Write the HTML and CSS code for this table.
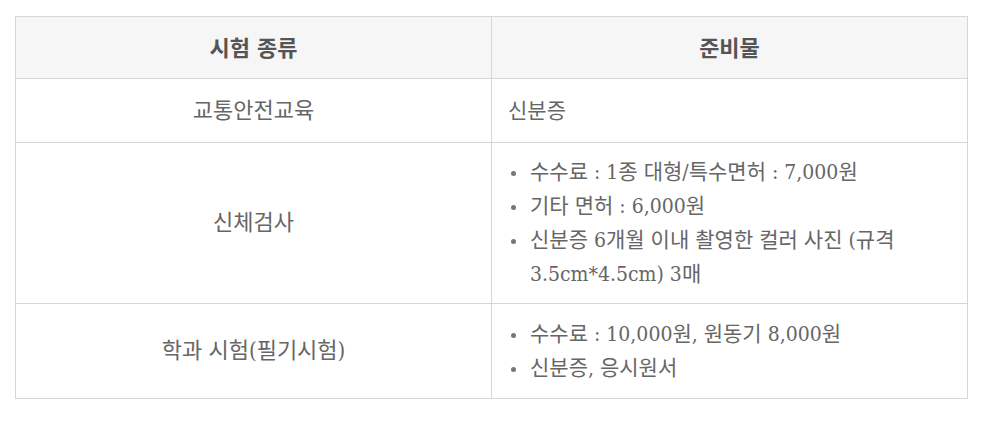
FILE: index.html
```html
<!DOCTYPE html>
<html lang="ko">
<head>
<meta charset="utf-8">
<link rel="stylesheet" href="styles.css">
</head>
<body>
<table class="exam-table">
  <thead>
    <tr>
      <th>시험 종류</th>
      <th>준비물</th>
    </tr>
  </thead>
  <tbody>
    <tr class="row-single">
      <td class="kind">교통안전교육</td>
      <td class="items">신분증</td>
    </tr>
    <tr>
      <td class="kind">신체검사</td>
      <td class="items">
        <ul class="list">
          <li>수수료 : 1종 대형/특수면허 : 7,000원</li>
          <li>기타 면허 : 6,000원</li>
          <li>신분증 6개월 이내 촬영한 컬러 사진 (규격 3.5cm*4.5cm) 3매</li>
        </ul>
      </td>
    </tr>
    <tr class="row-last">
      <td class="kind">학과 시험(필기시험)</td>
      <td class="items">
        <ul class="list">
          <li>수수료 : 10,000원, 원동기 8,000원</li>
          <li>신분증, 응시원서</li>
        </ul>
      </td>
    </tr>
  </tbody>
</table>
</body>
</html>
```
FILE: styles.css
```css
html, body {
  margin: 0;
  padding: 0;
  background: #fff;
}
body {
  padding: 16px 32px 0 15px;
  font-family: "DejaVu Serif Condensed", "DejaVu Serif", "Noto Sans CJK KR", serif;
  font-stretch: semi-condensed;
  color: #666;
  font-size: 21px;
}
.exam-table {
  width: 953px;
  border-collapse: collapse;
  table-layout: fixed;
}
.exam-table th,
.exam-table td {
  border: 1px solid #d6d6d6;
  vertical-align: middle;
}
.exam-table th {
  background: #f6f6f6;
  color: #555;
  font-weight: bold;
  font-size: 22px;
  height: 61px;
  padding: 0 16px;
  line-height: 34px;
  text-align: center;
}
.exam-table td {
  padding: 12px 16px;
  line-height: 34px;
}
.exam-table .row-single td {
  height: 63px;
  padding-top: 0;
  padding-bottom: 0;
}
.exam-table .row-last td {
  height: 94px;
  padding-top: 0;
  padding-bottom: 0;
}
.exam-table .kind {
  text-align: center;
  font-size: 22px;
}
.items {
  text-align: left;
}
.list {
  margin: 0;
  padding: 0 0 0 22px;
  list-style: none;
}
.list li::before {
  content: "";
  display: inline-block;
  width: 5px;
  height: 5px;
  border-radius: 50%;
  background: #777;
  margin-left: -19px;
  margin-right: 14px;
  vertical-align: middle;
}
```
